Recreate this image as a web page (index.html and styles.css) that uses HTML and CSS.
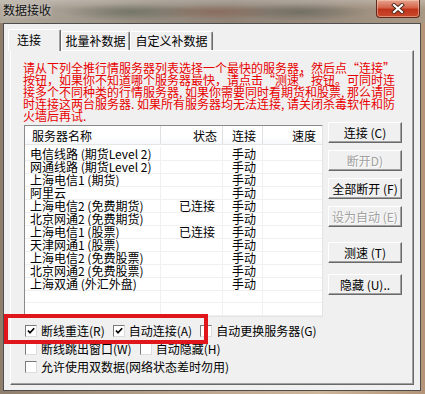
FILE: index.html
```html
<!DOCTYPE html>
<html lang="zh-CN">
<head>
    <meta charset="UTF-8">
    <meta name="viewport" content="width=device-width, initial-scale=1.0">
    <title>数据接收</title>
    <link rel="stylesheet" href="styles.css">
</head>
<body>
    <div class="window">
        <div class="titlebar">
            <span class="title">数据接收</span>
            <span class="close-btn">
                <svg width="14" height="11" viewBox="0 0 14 11">
                    <path d="M3 2 L11 9 M11 2 L3 9" stroke="#4a2418" stroke-width="4" stroke-linecap="square"/>
                    <path d="M3 2 L11 9 M11 2 L3 9" stroke="#fff" stroke-width="2.2" stroke-linecap="square"/>
                </svg>
            </span>
        </div>

        <div class="client">
            <div class="tabs">
                <div class="tab active">连接</div>
                <div class="tab tab-batch">批量补数据</div>
                <div class="tab tab-custom">自定义补数据</div>
            </div>

            <div class="panel">
                <p class="notice">
                    请从下列全推行情服务器列表选择一个最快的服务器，然后点“连接”<br>
                    按钮，如果你不知道哪个服务器最快，请点击“测速”按钮。可同时连<br>
                    接多个不同种类的行情服务器, 如果你需要同时看期货和股票, 那么请同<br>
                    时连接这两台服务器. 如果所有服务器均无法连接, 请关闭杀毒软件和防<br>
                    火墙后再试.
                </p>

                <div class="main">
                    <div class="list">
                        <div class="list-head">
                            <div class="col name">服务器名称</div>
                            <div class="col state">状态</div>
                            <div class="col mode">连接</div>
                            <div class="col speed">速度</div>
                        </div>
                        <div class="list-body">
                            <div class="list-row"><div class="col name">电信线路 (期货Level 2)</div><div class="col state"></div><div class="col mode">手动</div><div class="col speed"></div></div>
                            <div class="list-row"><div class="col name">网通线路 (期货Level 2)</div><div class="col state"></div><div class="col mode">手动</div><div class="col speed"></div></div>
                            <div class="list-row"><div class="col name">上海电信1 (期货)</div><div class="col state"></div><div class="col mode">手动</div><div class="col speed"></div></div>
                            <div class="list-row"><div class="col name">阿里云</div><div class="col state"></div><div class="col mode">手动</div><div class="col speed"></div></div>
                            <div class="list-row"><div class="col name">上海电信2 (免费期货)</div><div class="col state">已连接</div><div class="col mode">手动</div><div class="col speed"></div></div>
                            <div class="list-row"><div class="col name">北京网通2 (免费期货)</div><div class="col state"></div><div class="col mode">手动</div><div class="col speed"></div></div>
                            <div class="list-row"><div class="col name">上海电信1 (股票)</div><div class="col state">已连接</div><div class="col mode">手动</div><div class="col speed"></div></div>
                            <div class="list-row"><div class="col name">天津网通1 (股票)</div><div class="col state"></div><div class="col mode">手动</div><div class="col speed"></div></div>
                            <div class="list-row"><div class="col name">上海电信2 (免费股票)</div><div class="col state"></div><div class="col mode">手动</div><div class="col speed"></div></div>
                            <div class="list-row"><div class="col name">北京网通2 (免费股票)</div><div class="col state"></div><div class="col mode">手动</div><div class="col speed"></div></div>
                            <div class="list-row"><div class="col name">上海双通 (外汇外盘)</div><div class="col state"></div><div class="col mode">手动</div><div class="col speed"></div></div>
                            <div class="list-row"><div class="col name"></div><div class="col state"></div><div class="col mode"></div><div class="col speed"></div></div>
                            <div class="list-row"><div class="col name"></div><div class="col state"></div><div class="col mode"></div><div class="col speed"></div></div>
                        </div>
                    </div>

                    <div class="buttons">
                        <button class="btn">连接 (C)</button>
                        <button class="btn" disabled>断开D)</button>
                        <button class="btn">全部断开 (F)</button>
                        <button class="btn" disabled>设为自动 (E)</button>
                        <button class="btn btn-speed">测速 (T)</button>
                        <button class="btn btn-hide">隐藏 (U)..</button>
                    </div>
                </div>

                <div class="options">
                    <div class="opt-row">
                        <label class="opt">
                            <span class="cb"><svg width="10" height="10" viewBox="0 0 10 10"><path d="M2 4.5 L4 6.8 L8.2 2.2" fill="none" stroke="#000" stroke-width="1.7"/></svg></span>
                            断线重连(R)
                        </label>
                        <label class="opt">
                            <span class="cb"><svg width="10" height="10" viewBox="0 0 10 10"><path d="M2 4.5 L4 6.8 L8.2 2.2" fill="none" stroke="#000" stroke-width="1.7"/></svg></span>
                            自动连接(A)
                        </label>
                        <label class="opt">
                            <span class="cb"></span>
                            自动更换服务器(G)
                        </label>
                    </div>
                    <div class="opt-row">
                        <label class="opt">
                            <span class="cb"></span>
                            断线跳出窗口(W)
                        </label>
                        <label class="opt">
                            <span class="cb"></span>
                            自动隐藏(H)
                        </label>
                    </div>
                    <div class="opt-row">
                        <label class="opt">
                            <span class="cb"></span>
                            允许使用双数据(网络状态差时勿用)
                        </label>
                    </div>
                </div>
            </div>
        </div>

        <!-- highlight box drawn over the first two options -->
        <div class="mark"></div>
    </div>
</body>
</html>
```

FILE: styles.css
```css
* {
    box-sizing: border-box;
}

body {
    margin: 0;
    font-family: "Noto Sans CJK SC", "Noto Sans", sans-serif;
    font-size: 12px;
    color: #000;
}

.window {
    position: relative;
    width: 425px;
    height: 394px;
    overflow: hidden;
    background: linear-gradient(90deg, #8f7e6c 0%, #b8a28a 40%, #cdb59a 75%, #b49579 100%);
}

/* aero title bar */
.titlebar {
    display: flex;
    height: 23px;
    background:
        linear-gradient(180deg, rgba(255, 255, 255, 0.25) 0%, rgba(255, 255, 255, 0) 40%),
        radial-gradient(ellipse 70px 9px at 130px 12px, rgba(88, 98, 84, 0.55), rgba(88, 98, 84, 0)),
        radial-gradient(ellipse 60px 8px at 215px 12px, rgba(130, 80, 62, 0.45), rgba(130, 80, 62, 0)),
        radial-gradient(ellipse 70px 9px at 300px 12px, rgba(80, 86, 78, 0.5), rgba(80, 86, 78, 0)),
        linear-gradient(90deg, #b1a89c 0%, #a69d91 15%, #958b7f 35%, #8f8376 55%, #978a7c 75%, #a39482 90%, #a89884 100%);
}

.title {
    padding: 3px 0 0 3px;
    line-height: 13px;
    color: #111;
    text-shadow: 0 0 4px rgba(255, 255, 255, 0.7);
}

.close-btn {
    display: flex;
    align-items: center;
    justify-content: center;
    width: 44px;
    height: 18px;
    margin-left: auto;
    margin-right: 5px;
    border: 1px solid #5e2a1e;
    border-top: none;
    border-radius: 0 0 4px 4px;
    background: linear-gradient(180deg, #e7a48f 0%, #d4644a 45%, #c0341c 55%, #c94a2c 100%);
    box-shadow: inset 0 0 0 1px rgba(255, 220, 200, 0.45);
}

/* dialog client area */
.client {
    width: 418px;
    height: 368px;
    margin-left: 3px;
    padding: 5px 6px 0 6px;
    border: 1px solid #4e4e4e;
    background-color: #f0f0f0;
}

.tabs {
    display: flex;
    align-items: flex-end;
    height: 21px;
}

.tab {
    height: 19px;
    padding-top: 3px;
    line-height: 12px;
    text-align: center;
    background-color: #f0f0f0;
    border: 1px solid;
    border-color: #fff #696969 transparent #fff;
    border-bottom: none;
    border-radius: 2px 2px 0 0;
    box-shadow: inset -1px 0 0 #a0a0a0;
}

.tab.active {
    position: relative;
    z-index: 2;
    width: 53px;
    height: 22px;
    margin-left: -2px;
    margin-bottom: -1px;
    padding: 4px 0 0 8px;
    text-align: left;
}

.tab-batch {
    width: 69px;
}

.tab-custom {
    width: 83px;
}

.panel {
    width: 404px;
    height: 335px;
    padding: 11px 0 0 12px;
    border: 1px solid;
    border-color: #fff #696969 #696969 #fff;
    box-shadow: inset -1px -1px 0 #a0a0a0;
}

.notice {
    margin: 0;
    color: #e80000;
    line-height: 12px;
    white-space: nowrap;
}

.main {
    display: flex;
    align-items: flex-start;
}

/* server list */
.list {
    width: 299px;
    height: 192px;
    margin: 3px 0 0 1px;
    background-color: #fff;
    border: 1px solid;
    border-color: #8a8a8a #e3e3e3 #e3e3e3 #8a8a8a;
}

.list-head,
.list-row {
    display: grid;
    grid-template-columns: 136px 62px 40px 59px;
}

.list-head {
    height: 19px;
    border-bottom: 1px solid #e5e5e5;
    background: linear-gradient(180deg, #fff 0%, #fff 60%, #f7f8fa 100%);
}

.list-head .col {
    padding-top: 3px;
    line-height: 13px;
    border-right: 1px solid #e0e0e0;
}

.list-body {
    padding-top: 2px;
}

.list-row {
    height: 13px;
}

.list-row .col {
    line-height: 13px;
    white-space: nowrap;
    border-right: 1px solid #f0f0f0;
    border-bottom: 1px solid #f0f0f0;
}

.list-row .col:last-child,
.list-head .col:last-child {
    border-right: none;
}

.col.name {
    padding-left: 5px;
}

.list-head .col.name {
    padding-left: 7px;
}

.col.state {
    text-align: right;
    padding-right: 7px;
}

.list-head .col.state {
    padding-right: 5px;
}

.col.mode {
    padding-left: 9px;
}

.col.speed {
    text-align: right;
    padding-right: 6px;
}

/* buttons column */
.buttons {
    display: flex;
    flex-direction: column;
    width: 74px;
    margin-left: 5px;
}

.btn {
    height: 21px;
    margin: 7px 0 0 0;
    padding: 0;
    font-family: inherit;
    font-size: 12px;
    line-height: 12px;
    color: #000;
    background-color: #f0f0f0;
    border: 1px solid;
    border-color: #fff #696969 #696969 #fff;
    box-shadow: inset -1px -1px 0 #a0a0a0;
    border-radius: 0;
}

.btn:first-child {
    margin-top: 0;
}

.btn:disabled {
    color: #a0a0a0;
    text-shadow: 1px 1px 0 #fff;
}

.btn-speed {
    margin-top: 15px;
}

.btn-hide {
    margin-top: 11px;
}

/* check boxes */
.options {
    margin: 5px 0 0 2px;
}

.opt-row {
    display: flex;
    align-items: center;
    height: 18px;
}

.opt {
    display: flex;
    align-items: center;
    margin-right: 8px;
    line-height: 12px;
    white-space: nowrap;
}

.cb {
    display: flex;
    align-items: center;
    justify-content: center;
    width: 12px;
    height: 12px;
    margin-right: 4px;
    background-color: #fff;
    border: 1px solid;
    border-color: #7a7a7a #dcdcdc #dcdcdc #7a7a7a;
}

.mark {
    position: absolute;
    left: 4px;
    top: 314px;
    width: 204px;
    height: 30px;
    border: 4px solid #e1161c;
}
```
